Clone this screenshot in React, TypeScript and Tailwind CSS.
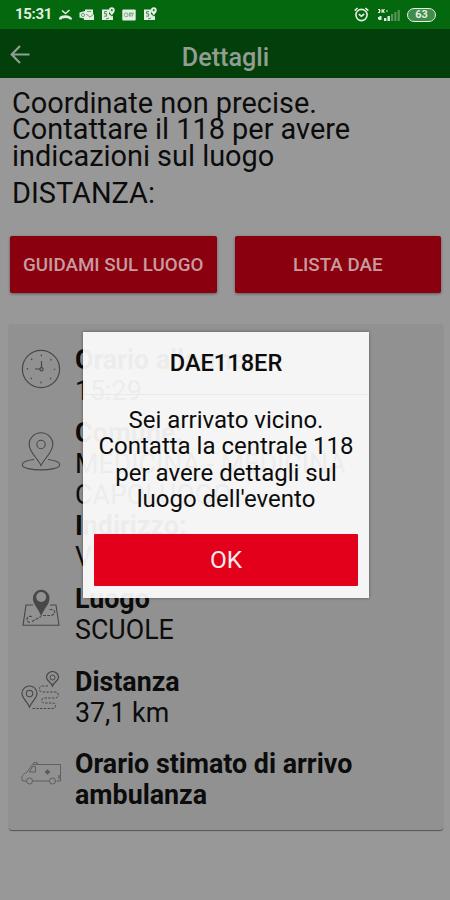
import type { ReactNode } from "react";

function MissedCallIcon() {
  return (
    <svg viewBox="0 0 13 12" className="w-[13px] h-3" fill="none" stroke="currentColor">
      <path d="M3 1.5 L6.5 4.6 L10.5 1" strokeWidth="1.5" />
      <path d="M1.2 10.5 C1.2 6.6 11.8 6.6 11.8 10.5" strokeWidth="2.6" />
    </svg>
  );
}

function MailIcon() {
  return (
    <svg viewBox="0 0 15 12" className="w-[15px] h-3" fill="currentColor">
      <path d="M6 0.5h8v4l1 1V11H5V9.5L0.5 8.5v-5L6 2z" />
      <g fill="none" stroke="#5c9a63" strokeWidth="0.9">
        <circle cx="4" cy="6" r="1.6" />
        <path d="M7 5l4 3 4-3M8 2.5h4" />
      </g>
    </svg>
  );
}

function PinAppIcon() {
  return (
    <svg viewBox="0 0 14 14" className="w-3.5 h-3.5 -mt-0.5" fill="currentColor">
      <path d="M1 2.5h7V7l3 2.5 1-1V13H1z" />
      <circle cx="10.8" cy="3.2" r="2.9" />
      <path d="M8.3 5h5L10.8 8.6z" />
      <circle cx="10.8" cy="3.2" r="1.1" fill="#3a8443" />
      <path d="M6 4.6H3.6v2.2h2v2.4H3.2M8 11l-3 1" fill="none" stroke="#3a8443" strokeWidth="0.9" />
    </svg>
  );
}

function BadgeIcon() {
  return (
    <svg viewBox="0 0 14 12" className="w-3.5 h-3" fill="currentColor">
      <rect x="0.3" y="0.5" width="13.4" height="11" rx="1" />
      <g fill="none" stroke="#5c9a63" strokeWidth="0.8">
        <rect x="2.6" y="4" width="3.2" height="3.6" rx="1" />
        <path d="M7.4 7.6V4h1.5v3.6M9 4h2.4L10 7.6" />
      </g>
    </svg>
  );
}

function AlarmIcon() {
  return (
    <svg viewBox="0 0 15 15" className="w-[15px] h-[15px]" fill="none" stroke="currentColor" strokeWidth="1.6">
      <circle cx="7.5" cy="8" r="5.6" />
      <path d="M4.8 7.2l2.5 2 3-2.2M0.7 3.6L3.6 1M14.3 3.6L11.4 1" />
    </svg>
  );
}

function SignalIcon() {
  return (
    <svg viewBox="0 0 24 14" className="w-6 h-3.5" fill="currentColor">
      <path d="M1 1h2v1.3l1 .7-1 .7V5H1V4h1V2H1zM4.5 1h1v1.3L7 1h1L6.8 3 8 5H7L5.5 3.7V5h-1zM9 2.6h2v1H9zM1 9h1.5V8h2v4H1.5V11H1z" />
      <rect x="7" y="10" width="2.4" height="3" />
      <rect x="10.5" y="8" width="2.4" height="5" />
      <rect x="14" y="6" width="2.2" height="7" opacity="0.35" />
      <rect x="17.3" y="4" width="2.2" height="9" opacity="0.35" />
      <rect x="20.6" y="2" width="2.2" height="11" opacity="0.35" />
    </svg>
  );
}

function ClockIcon() {
  return (
    <svg viewBox="0 0 40 40" className="w-10 h-10" fill="none" stroke="currentColor">
      <circle cx="20" cy="20" r="18.6" strokeWidth="1.2" />
      <circle cx="20" cy="20" r="13.5" strokeWidth="1.4" strokeDasharray="1.4 9.2" strokeDashoffset="0.7" />
      <path d="M20.5 12v7M14 20h5" strokeWidth="1.2" />
      <circle cx="20.5" cy="20.3" r="1.6" strokeWidth="1.2" />
    </svg>
  );
}

function PlaceIcon() {
  return (
    <svg viewBox="0 0 40 40" className="w-10 h-10" fill="none" stroke="currentColor" strokeWidth="1.1">
      <path d="M20 34.5C16.5 27 8.2 21.5 8.2 13.5a11.8 11.8 0 0 1 23.6 0C31.8 21.5 23.5 27 20 34.5z" />
      <circle cx="20" cy="13.5" r="4.2" />
      <path d="M13 28.5C5 29.5 1 31.5 1.3 34c.4 6.5 37 6.5 37.4 0C39 31.5 35 29.5 27 28.5" />
    </svg>
  );
}

function MapPinIcon() {
  return (
    <svg viewBox="0 0 40 40" className="w-10 h-10" fill="none" stroke="currentColor">
      <path d="M12 17H5L2 37.3h36L35 17h-6" strokeWidth="1.1" />
      <path d="M11 33.5l9-5M22 27.5h8c5-1 5-6 0-6h-2M11 28.5c-6-1.5-7 6-1.5 6" strokeWidth="1.1" strokeDasharray="3 1.2" />
      <path d="M20.2 28.5C17.5 20 11.9 17 11.9 10a8.3 8.3 0 0 1 16.6 0c0 7-5.6 10-8.3 18.5z" fill="currentColor" stroke="none" />
      <circle cx="20.2" cy="9" r="5" fill="#919191" stroke="none" />
    </svg>
  );
}

function RouteIcon() {
  return (
    <svg viewBox="0 0 40 40" className="w-10 h-10" fill="none" stroke="currentColor">
      <path d="M8.5 36C6.5 31 1 27 1 22.5a7.5 7.5 0 0 1 15 0C16 27 10.5 31 8.5 36z" strokeWidth="1.2" />
      <circle cx="8.5" cy="22.5" r="3.2" strokeWidth="1.1" />
      <path d="M31.5 15C30 11 25.5 9.5 25.5 6.5a6 6 0 0 1 12 0C37.5 9.5 33 11 31.5 15z" strokeWidth="1.2" />
      <circle cx="31.5" cy="6.5" r="2.5" strokeWidth="1" />
      <path
        d="M27 15h-6c-3.5 0-3.5 6 0 6h13c4.5 0 4.5 6 0 6H23c-3 0-3 5 0 5h9c3.5 0 3.5 5.5 0 5.5H11"
        strokeWidth="1"
        strokeDasharray="2.5 1.3"
      />
    </svg>
  );
}

function AmbulanceIcon() {
  return (
    <svg viewBox="0 0 40 24" className="w-10 h-6" fill="none" stroke="currentColor" strokeWidth="0.9">
      <path d="M5 20H1.5l-.8-3C1 13 5 12 6 11l5.5-7.5H39.5V20h-4M28 20H12" />
      <path d="M8.5 11h6V5.5h-3zM12 3.5l1-2h3v2" />
      <circle cx="8.5" cy="20" r="3" />
      <circle cx="31.5" cy="20" r="3" />
      <path d="M26.5 8.5v5M24 11h5" strokeWidth="2" />
      <path d="M38 14v4" strokeWidth="1.2" />
    </svg>
  );
}

interface DetailRowProps {
  icon: ReactNode;
  className: string;
  children: ReactNode;
}

function DetailRow({ icon, className, children }: DetailRowProps) {
  return (
    <div className={`flex ${className}`}>
      <div className="w-10 shrink-0 mr-[14px] text-[#484848]">{icon}</div>
      <div className="text-[26.8px] leading-[31px] whitespace-nowrap">{children}</div>
    </div>
  );
}

function StatusBar() {
  return (
    <div className="h-[29px] bg-[#04680f] text-[#e3efe3] flex items-center justify-between pl-[15px] pr-[14px]">
      <div className="flex items-center">
        <span className="text-[15px] font-bold w-11 tracking-[-0.3px]">15:31</span>
        <div className="flex items-center gap-[7px]">
          <MissedCallIcon />
          <MailIcon />
          <PinAppIcon />
          <BadgeIcon />
          <PinAppIcon />
        </div>
      </div>
      <div className="flex items-center">
        <AlarmIcon />
        <div className="ml-2 mr-1.5">
          <SignalIcon />
        </div>
        <div className="w-[29px] h-[14px] rounded-full border-[1.5px] border-current bg-[#3f8d49] flex items-center justify-center text-[11px] leading-none font-bold">
          63
        </div>
      </div>
    </div>
  );
}

export default function App() {
  return (
    <div className="relative w-[450px] h-[900px] overflow-hidden bg-[#989898] text-[#0c0c0c] font-['Roboto',sans-serif]">
      <StatusBar />

      <header className="h-[49px] bg-[#033f0b] text-[#929e93] flex items-center">
        <div className="w-10 pl-[10px] pt-[3px]">
          <svg viewBox="0 0 20 20" className="w-5 h-5" fill="none" stroke="currentColor" strokeWidth="2.2">
            <path d="M19.5 9.5H2M10 1L1.7 9.5 10 18" />
          </svg>
        </div>
        <h1 className="flex-1 text-center pr-[39px] pt-2 text-[25.2px] leading-none font-medium">Dettagli</h1>
      </header>

      <div className="pl-3 pt-3 text-[28.9px]">
        <p className="leading-[26.3px]">
          Coordinate non precise.
          <br />
          Contattare il 118 per avere
          <br />
          indicazioni sul luogo
        </p>
        <p className="leading-[34px] mt-[7px]">DISTANZA:</p>
      </div>

      <div className="flex gap-[18px] pl-[10px] pr-[9px] mt-[26px]">
        <button className="flex-1 h-[57px] pt-0.5 rounded-[2px] bg-[#8a000e] text-[#c79ca0] text-[18.8px] font-medium whitespace-nowrap shadow-[0_1px_3px_rgba(0,0,0,0.4)]">
          GUIDAMI SUL LUOGO
        </button>
        <button className="flex-1 h-[57px] pt-0.5 rounded-[2px] bg-[#8a000e] text-[#c79ca0] text-[18.8px] font-medium whitespace-nowrap shadow-[0_1px_3px_rgba(0,0,0,0.4)]">
          LISTA DAE
        </button>
      </div>

      <section className="mt-[31px] ml-[9px] mr-[7px] h-[506px] rounded-[3px] bg-[#919191] pl-3 pt-[21px] shadow-[0_1px_1px_rgba(0,0,0,0.45)]">
        <DetailRow icon={<div className="pt-1"><ClockIcon /></div>} className="">
          <p className="font-bold">Orario allarme:</p>
          <p>15:29</p>
        </DetailRow>
        <DetailRow icon={<div className="pt-[13px]"><PlaceIcon /></div>} className="mt-[11px]">
          <p className="font-bold">Comune:</p>
          <p>MEDICINA - MEDICINA</p>
          <p>CAPOLUOGO</p>
          <p className="font-bold">Indirizzo:</p>
          <p>VIA</p>
        </DetailRow>
        <DetailRow icon={<div className="pt-1"><MapPinIcon /></div>} className="mt-[11px]">
          <p className="font-bold">Luogo</p>
          <p>SCUOLE</p>
        </DetailRow>
        <DetailRow icon={<div className="pt-1"><RouteIcon /></div>} className="mt-[21px]">
          <p className="font-bold">Distanza</p>
          <p>37,1 km</p>
        </DetailRow>
        <DetailRow icon={<div className="pt-3 opacity-75"><AmbulanceIcon /></div>} className="mt-[20.5px]">
          <p className="font-bold">Orario stimato di arrivo</p>
          <p className="font-bold">ambulanza</p>
        </DetailRow>
      </section>

      {/* Dialog */}
      <div className="absolute left-[83px] top-[332px] w-[286px] h-[266px] bg-[#fbfbfb]/94 shadow-[0_0_3px_rgba(0,0,0,0.4)] text-center">
        <h2 className="h-[63px] border-b border-[#e9e9e9] text-[23.6px] leading-[62px] font-medium">DAE118ER</h2>
        <p className="pt-3 text-[24px] leading-[26.3px] whitespace-nowrap">
          Sei arrivato vicino.
          <br />
          Contatta la centrale 118
          <br />
          per avere dettagli sul
          <br />
          luogo dell'evento
        </p>
        <button className="mt-[22px] w-[264px] h-[52px] rounded-[1px] bg-[#e2001a] text-[#fbeaea] text-[24.5px] pt-px">OK</button>
      </div>
    </div>
  );
}
